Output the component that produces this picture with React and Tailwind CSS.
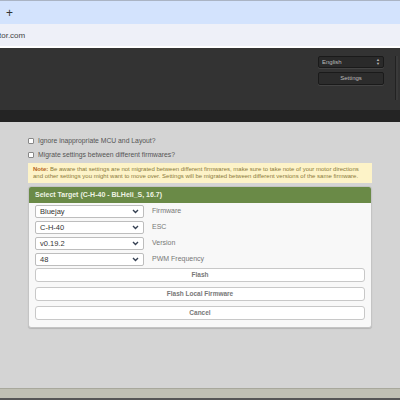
import React from "react";

const Chevron = () => (
  <svg width="7" height="5" viewBox="0 0 7 5" className="text-gray-700">
    <path d="M1 1l2.5 2.5L6 1" fill="none" stroke="currentColor" strokeWidth="1.4" />
  </svg>
);

const SelectRow = ({ value, label }) => (
  <div className="flex items-center h-[13px]">
    <div className="w-[109px] h-[13px] bg-white border border-[#bdbdbd] rounded-[2px] flex items-center justify-between pl-[4px] pr-[4px] text-[7.5px] text-[#333]">
      <span>{value}</span>
      <Chevron />
    </div>
    <span className="ml-[8px] text-[7px] text-[#777]">{label}</span>
  </div>
);

const Btn = ({ children }) => (
  <div className="h-[14px] bg-white border border-[#c8c8c8] rounded-[3px] flex items-center justify-center text-[6.5px] font-bold text-[#777]">
    {children}
  </div>
);

const App = () => {
  return (
    <div className="w-[400px] h-[400px] overflow-hidden flex flex-col bg-[#d4d4d4] font-['Liberation_Sans',Arial,sans-serif]">
      {/* browser tabs */}
      <div className="h-[24px] bg-[#d3e3fd] border-t border-[#aab4c4] flex items-center pl-[6px] text-[12px] text-[#333]">
        +
      </div>
      {/* address bar */}
      <div className="h-[22px] bg-[#eef0f8] flex items-center text-[8px] text-[#444] -ml-[1px] pt-[2px]">
        tor.com
      </div>
      <div className="h-[2px] bg-white" />

      {/* app header */}
      <div className="h-[62px] bg-[#333333] flex justify-end pt-[8px] pr-[2px]">
        <div className="flex flex-col gap-[4px] mr-[11px]">
          <div className="w-[66px] h-[12px] rounded-[2px] bg-[#2a2a2a] border border-[#1a1a1a] shadow-[0_1px_0_#444] flex items-center justify-between px-[3px] text-[6px] text-[#bbb]">
            <span>English</span>
            <span className="flex flex-col leading-none text-[4px]">
              <span>▲</span>
              <span>▼</span>
            </span>
          </div>
          <div className="w-[66px] h-[13px] rounded-[2px] bg-[#2c2c2c] border border-[#1a1a1a] shadow-[0_1px_0_#444] flex items-center justify-center text-[6px] text-[#bbb]">
            Settings
          </div>
        </div>
        <div className="w-[3px] h-[44px] bg-[#3a3a3a] border-l border-[#222]" />
      </div>
      <div className="h-[12px] bg-[#242424]" />

      {/* content */}
      <div className="flex-1 flex flex-col pl-[28px] pr-[28px] pt-[14px]">
        <label className="flex items-center gap-[4px] text-[6.8px] text-[#555] h-[10px]">
          <span className="w-[6px] h-[6px] bg-white border border-[#888] rounded-[1px]" />
          Ignore inappropriate MCU and Layout?
        </label>
        <label className="flex items-center gap-[4px] text-[6.8px] text-[#555] h-[10px] mt-[4px]">
          <span className="w-[6px] h-[6px] bg-white border border-[#888] rounded-[1px]" />
          Migrate settings between different firmwares?
        </label>

        <div className="mt-[3px] bg-[#fdf3c8] px-[5px] pt-[3px] pb-[3px] text-[6px] leading-[7px] text-[#8a7a3a] whitespace-nowrap overflow-hidden">
          <span className="font-bold text-[#b5651d]">Note:</span> Be aware that settings are not migrated between different firmwares, make sure to take note of your motor directions
          <br />
          and other settings you might want to move over. Settings will be migrated between different versions of the same firmware.
        </div>

        <div className="mt-[3px] border border-[#c4c4c4] rounded-[3px] bg-[#f8f8f8] shadow-[0_1px_1px_rgba(0,0,0,0.15)]">
          <div className="h-[16px] bg-[#6a8a47] flex items-center px-[6px] text-[7px] font-bold text-[#eef3e4] rounded-t-[2px]">
            Select Target (C-H-40 - BLHeli_S, 16.7)
          </div>
          <div className="px-[6px] pt-[2px] pb-[7px] flex flex-col">
            <div className="flex flex-col gap-[3px]">
              <SelectRow value="Bluejay" label="Firmware" />
              <SelectRow value="C-H-40" label="ESC" />
              <SelectRow value="v0.19.2" label="Version" />
              <SelectRow value="48" label="PWM Frequency" />
            </div>
            <div className="flex flex-col gap-[5px] mt-[2px]">
              <Btn>Flash</Btn>
              <Btn>Flash Local Firmware</Btn>
              <Btn>Cancel</Btn>
            </div>
          </div>
        </div>
      </div>

      {/* footer */}
      <div className="h-[10px] bg-[#bfbfb3] border-t border-[#a8a89c]" />
      <div className="h-[2px] bg-[#555]" />
    </div>
  );
};

export default App;
